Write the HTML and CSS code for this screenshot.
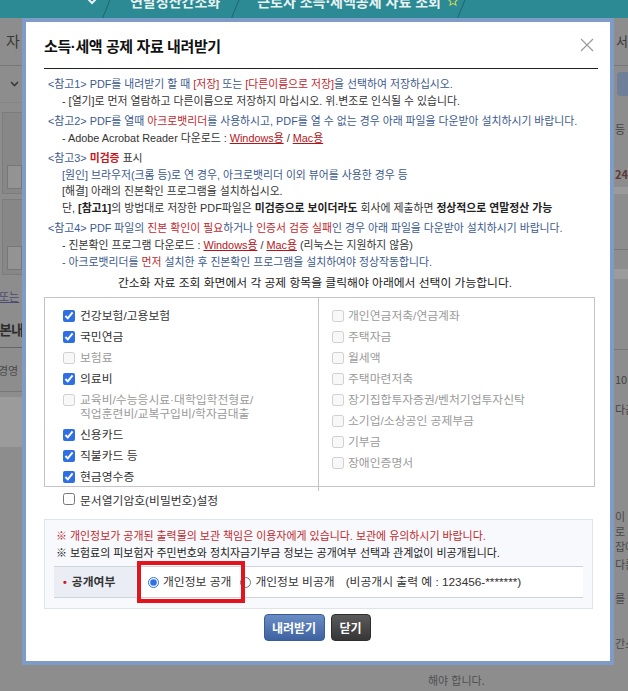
FILE: index.html
```html
<!DOCTYPE html>
<html lang="ko">
<head>
<meta charset="utf-8">
<title>소득·세액 공제 자료 내려받기</title>
<link rel="stylesheet" href="styles.css">
</head>
<body>
<div class="topbar">
  <div class="crumbs">
    <span class="chev"><svg width="14" height="10" viewBox="0 0 14 10"><path d="M2 2l5 5 5-5" fill="none" stroke="#e8f2f2" stroke-width="2"/></svg></span>
    <span class="sep sep1"></span>
    <span class="crumb c1">연말정산간소화</span>
    <span class="sep sep2"></span>
    <span class="crumb c2">근로자 소득·세액공제 자료 조회</span>
    <span class="star"><svg width="12" height="12" viewBox="0 0 12 12"><path d="M6 1l1.4 3.2 3.4.3-2.6 2.3.8 3.4L6 8.4 3 10.2l.8-3.4L1.2 4.5l3.4-.3z" fill="none" stroke="#c9d65a" stroke-width="1.1"/></svg></span>
    <span class="sep sep3"></span>
  </div>
</div>

<div class="page">
  <div class="lstrip">
    <div class="l-row l-r1"><span class="l-big">자</span></div>
    <div class="l-row l-r2"><svg width="9" height="6" viewBox="0 0 9 6"><path d="M1 1l3.5 3.5L8 1" fill="none" stroke="#3a3a3a" stroke-width="1.6"/></svg></div>
    <div class="l-panel l-p1"><div class="l-inner"></div></div>
    <div class="l-panel l-p2"><div class="l-inner"></div></div>
    <div class="l-txt l-link">또는</div>
    <div class="l-row l-r8"><span class="l-bold">본내</span></div>
    <div class="l-row l-r9"><span class="l-small">경영</span></div>
    <div class="l-band"></div>
  </div>
  <div class="mid">
    <p class="midtext">해야 합니다.</p>
  </div>
  <div class="rstrip">
    <div class="r-row r-r1"><span class="r-big">서</span></div>
    <div class="r-btn"></div>
    <div class="r-t r-t1">등</div>
    <div class="r-t r-t2">24</div>
    <div class="r-band r-b1"></div>
    <div class="r-line r-l1"></div>
    <div class="r-band r-b2"></div>
    <div class="r-line r-l2"></div>
    <div class="r-t r-t3">10</div>
    <div class="r-t r-t4">다금</div>
    <div class="r-s r-s1">이</div>
    <div class="r-s">로</div>
    <div class="r-s">잡에</div>
    <div class="r-s r-s4">다른</div>
    <div class="r-s r-s5">를</div>
    <div class="r-s r-s6">간스</div>
  </div>
</div>

<div class="modal">
  <div class="mhead">
    <h1 class="mtitle">소득·세액 공제 자료 내려받기</h1>
    <svg class="close" width="14" height="14" viewBox="0 0 14 14"><path d="M1 1L13 13M13 1L1 13" fill="none" stroke="#9a9a9a" stroke-width="1.2"/></svg>
  </div>

  <div class="notes">
    <div class="nb">
      <p class="blue">&lt;참고1&gt; PDF를 내려받기 할 때 <span class="red">[저장]</span> 또는 <span class="red">[다른이름으로 저장]</span>을 선택하여 저장하십시오.</p>
      <p class="sub dark">- [열기]로 먼저 열람하고 다른이름으로 저장하지 마십시오. 위.변조로 인식될 수 있습니다.</p>
    </div>
    <div class="nb">
      <p class="blue">&lt;참고2&gt; PDF를 열때 <span class="red">아크로뱃리더</span>를 사용하시고, PDF를 열 수 없는 경우 아래 파일을 다운받아 설치하시기 바랍니다.</p>
      <p class="sub dark">- Adobe Acrobat Reader 다운로드 : <a class="lnk">Windows용</a> / <a class="lnk">Mac용</a></p>
    </div>
    <div class="nb">
      <p class="blue">&lt;참고3&gt; <b class="red-b">미검증</b> <span class="dark">표시</span></p>
      <p class="sub blue">[원인] 브라우저(크롬 등)로 연 경우, 아크로뱃리더 이외 뷰어를 사용한 경우 등</p>
      <p class="sub dark">[해결] 아래의 진본확인 프로그램을 설치하십시오.</p>
      <p class="sub dark">단, <b>[참고1]</b>의 방법대로 저장한 PDF파일은 <b>미검증으로 보이더라도</b> 회사에 제출하면 <b>정상적으로 연말정산 가능</b></p>
    </div>
    <div class="nb">
      <p class="blue">&lt;참고4&gt; PDF 파일의 <span class="red">진본 확인이 필요</span>하거나 <span class="red">인증서 검증 실패</span>인 경우 아래 파일을 다운받아 설치하시기 바랍니다.</p>
      <p class="sub dark">- 진본확인 프로그램 다운로드 : <a class="lnk">Windows용</a> / <a class="lnk">Mac용</a> (리눅스는 지원하지 않음)</p>
      <p class="sub blue">- 아크로뱃리더를 <span class="red">먼저</span> 설치한 후 진본확인 프로그램을 설치하여야 정상작동합니다.</p>
    </div>
  </div>

  <p class="guide">간소화 자료 조회 화면에서 각 공제 항목을 클릭해야 아래에서 선택이 가능합니다.</p>

  <div class="items">
    <ul class="col col-l">
      <li><label class="item"><input type="checkbox" checked><span>건강보험/고용보험</span></label></li>
      <li><label class="item"><input type="checkbox" checked><span>국민연금</span></label></li>
      <li><label class="item off"><input type="checkbox" disabled><span>보험료</span></label></li>
      <li><label class="item"><input type="checkbox" checked><span>의료비</span></label></li>
      <li><label class="item off"><input type="checkbox" disabled><span>교육비/수능응시료·대학입학전형료/<br>직업훈련비/교복구입비/학자금대출</span></label></li>
      <li><label class="item"><input type="checkbox" checked><span>신용카드</span></label></li>
      <li><label class="item"><input type="checkbox" checked><span>직불카드 등</span></label></li>
      <li><label class="item"><input type="checkbox" checked><span>현금영수증</span></label></li>
    </ul>
    <ul class="col col-r">
      <li><label class="item off"><input type="checkbox" disabled><span>개인연금저축/연금계좌</span></label></li>
      <li><label class="item off"><input type="checkbox" disabled><span>주택자금</span></label></li>
      <li><label class="item off"><input type="checkbox" disabled><span>월세액</span></label></li>
      <li><label class="item off"><input type="checkbox" disabled><span>주택마련저축</span></label></li>
      <li><label class="item off"><input type="checkbox" disabled><span>장기집합투자증권/벤처기업투자신탁</span></label></li>
      <li><label class="item off"><input type="checkbox" disabled><span>소기업/소상공인 공제부금</span></label></li>
      <li><label class="item off"><input type="checkbox" disabled><span>기부금</span></label></li>
      <li><label class="item off"><input type="checkbox" disabled><span>장애인증명서</span></label></li>
    </ul>
  </div>

  <label class="pw"><input type="checkbox"><span>문서열기암호(비밀번호)설정</span></label>

  <div class="notice">
    <p class="n-red">※ 개인정보가 공개된 출력물의 보관 책임은 이용자에게 있습니다. 보관에 유의하시기 바랍니다.</p>
    <p class="n-dark">※ 보험료의 피보험자 주민번호와 정치자금기부금 정보는 공개여부 선택과 관계없이 비공개됩니다.</p>
    <div class="ptable">
      <div class="pth"><span class="dot">•</span>공개여부</div>
      <div class="ptd">
        <label class="rad rad1"><input type="radio" name="open" checked><span>개인정보 공개</span></label>
        <label class="rad rad2"><input type="radio" name="open"><span>개인정보 비공개</span></label>
        <span class="ex">(비공개시 출력 예 : 123456-*******)</span>
      </div>
      <div class="hl"></div>
    </div>
  </div>

  <div class="btns">
    <button class="btn btn-blue">내려받기</button>
    <button class="btn btn-dark">닫기</button>
  </div>
</div>
</body>
</html>
```

FILE: styles.css
```css
html, body {
  margin: 0;
  padding: 0;
  width: 628px;
  height: 691px;
  overflow: hidden;
}
body {
  position: relative;
  background: #8d8d8d;
  font-family: "Noto Sans CJK KR", "Noto Sans", sans-serif;
}
p { margin: 0; }

/* top bar */
.topbar {
  height: 18px;
  background: #2b8a94;
  overflow: hidden;
}
.crumbs {
  display: flex;
  align-items: center;
  height: 22px;
  margin-top: -10px;
  color: #e8f2f2;
  font-weight: bold;
  font-size: 14px;
  white-space: nowrap;
}
.chev { margin-left: 85px; display: flex; }
.sep {
  width: 0;
  height: 40px;
  border-left: 1px solid rgba(0,0,0,0.28);
  transform: skewX(-22deg);
}
.sep1 { margin-left: 10px; }
.c1 { margin-left: 20px; }
.sep2 { margin-left: 18px; }
.c2 { margin-left: 18px; }
.star { margin-left: 6px; display: flex; }
.sep3 { margin-left: 5px; }

/* background page */
.page {
  display: flex;
  height: 673px;
}
.lstrip {
  width: 22px;
  overflow: hidden;
  display: flex;
  flex-direction: column;
  color: #3a3a3a;
  white-space: nowrap;
}
.l-row { border-bottom: 1px solid #777; display: flex; align-items: center; }
.l-r1 { height: 47px; padding-left: 6px; align-items: flex-start; }
.l-big { font-size: 15px; line-height: 20px; margin-top: 13px; color: #383838; }
.l-r2 { height: 36px; justify-content: flex-end; padding-right: 3px; border-bottom-color: #858585; }
.l-panel {
  margin-top: 9px;
  margin-left: 2px;
  height: 80px;
  background: #878787;
  border: 1px solid #7c7c7c;
  border-right: 0;
  display: flex;
  align-items: flex-end;
}
.l-p2 { margin-top: 5px; height: 74px; }
.l-inner {
  width: 14px;
  height: 22px;
  margin: 0 0 4px 4px;
  background: #939393;
  border: 1px solid #777;
}
.l-txt { font-size: 11px; line-height: 14px; margin-top: 14px; color: #4a4a70; text-decoration: underline; margin-left: -1px; }
.l-r8 { height: 44px; border-bottom-color: #666; }
.l-bold { font-size: 14px; font-weight: bold; color: #2e2e2e; margin-left: -1px; margin-top: 8px; letter-spacing: -1px; }
.l-r9 { height: 43px; }
.l-small { font-size: 11px; color: #4a4a4a; margin-left: -2px; }
.l-band { margin-top: 5px; height: 50px; background: #9b9b9b; }

.mid { flex: 1; position: relative; }
.midtext {
  margin-top: 654px;
  padding-left: 406px;
  font-size: 11px;
  line-height: 16px;
  color: #505050;
}
.rstrip {
  width: 14px;
  overflow: hidden;
  display: flex;
  flex-direction: column;
  color: #444;
  font-size: 11px;
  white-space: nowrap;
}
.r-row { border-bottom: 1px solid #777; }
.r-r1 { height: 47px; padding-left: 2px; }
.r-big { display: block; font-size: 13px; line-height: 20px; margin-top: 13px; color: #3a3a3a; }
.r-btn { margin: 6px 0 0 3px; height: 24px; background: #6f7f99; border-radius: 4px 0 0 4px; }
.r-t { height: 16px; line-height: 16px; padding-left: 1px; }
.r-t1 { margin-top: 25px; }
.r-t2 { margin-top: 29px; color: #5a3a3a; font-weight: bold; }
.r-band { background: #9b9b9b; }
.r-b1 { margin-top: 5px; height: 7px; }
.r-line { height: 1px; background: #777; }
.r-l1 { margin-top: 55px; }
.r-b2 { margin-top: 19px; height: 10px; }
.r-l2 { margin-top: 70px; }
.r-t3 { margin-top: 21px; }
.r-t4 { margin-top: 14px; }
.r-s { height: 15px; line-height: 15px; padding-left: 1px; color: #4a4a4a; }
.r-s1 { margin-top: 92px; }
.r-s4 { margin-top: 3px; }
.r-s5 { margin-top: 19px; }
.r-s6 { margin-top: 30px; }

/* modal */
.modal {
  position: absolute;
  left: 22px;
  top: 18px;
  width: 592px;
  height: 647px;
  box-sizing: border-box;
  border: 4px solid #7f9cc8;
  background: #fff;
  color: #333;
  font-family: "Liberation Sans", "Noto Sans CJK KR", sans-serif;
}
.mhead {
  margin: 0 12px 0 18px;
  height: 46px;
  border-bottom: 1px solid #222;
  display: flex;
  align-items: center;
  justify-content: space-between;
}
.mtitle {
  margin: 0;
  font-size: 15px;
  font-weight: bold;
  color: #111;
  letter-spacing: -0.4px;
}
.close { margin-right: 4px; }

.notes {
  padding: 7px 0 0 22px;
  font-size: 10.85px;
  line-height: 16.7px;
  white-space: nowrap;
}
.nb { margin-bottom: 3.5px; }
.nb:last-child { margin-bottom: 0; }
.sub { padding-left: 14px; }
.blue { color: #3b5a8e; }
.dark { color: #333; }
.red { color: #c0282d; }
.red-b { color: #c4161c; font-weight: bold; }
.notes b { font-weight: bold; color: #222; }
.notes .red-b { color: #c4161c; }
.lnk { color: #b3141a; text-decoration: underline; }

.guide {
  margin: 5px 0 0 0;
  padding-right: 6px;
  text-align: center;
  font-size: 11.8px;
  line-height: 16px;
  color: #222;
}

.items {
  margin: 6px 0 0 18px;
  width: 551px;
  height: 190px;
  box-sizing: border-box;
  border: 1px solid #c4c4c4;
  display: grid;
  grid-template-columns: 274px 1fr;
}
.col {
  list-style: none;
  margin: 0;
  padding: 11px 0 0 0;
}
.col-l { padding-left: 18px; border-right: 1px solid #c4c4c4; }
.col-r { padding-left: 13px; }
.col li { margin-bottom: 7px; }
.item {
  display: flex;
  align-items: flex-start;
  font-size: 11.8px;
  line-height: 14px;
  color: #333;
  white-space: nowrap;
}
.item input {
  width: 12px;
  height: 12px;
  margin: 1px 5px 0 0;
  accent-color: #2f6fe4;
  flex: none;
}
.col-r .item input { margin-right: 4px; }
.item.off { color: #9a9a9a; }

.pw {
  display: flex;
  align-items: center;
  margin: 4px 0 0 37px;
  height: 16px;
  font-size: 11.8px;
  color: #333;
}
.pw input {
  width: 12px;
  height: 12px;
  margin: 0 5px 0 0;
}

.notice {
  margin: 12px 0 0 18px;
  width: 549px;
  box-sizing: border-box;
  border: 1px solid #dfe4ec;
  background: #f7f9fc;
  padding: 8px 9px 10px 9px;
  font-size: 10.95px;
  line-height: 16.5px;
  white-space: nowrap;
}
.n-red { padding-left: 2px; color: #c0282d; }
.n-dark { padding-left: 2px; color: #222; }
.ptable {
  position: relative;
  margin-top: 5px;
  height: 32px;
  box-sizing: border-box;
  border-top: 1px solid #cfd4dc;
  border-bottom: 1px solid #cfd4dc;
  display: flex;
}
.pth {
  width: 82px;
  background: #eaedf3;
  display: flex;
  align-items: center;
  padding-left: 9px;
  box-sizing: border-box;
  font-weight: bold;
  font-size: 11.8px;
  color: #333;
}
.dot { color: #d0181e; margin-right: 5px; font-size: 11px; }
.ptd {
  flex: 1;
  background: #fff;
  display: flex;
  align-items: center;
  padding-left: 12px;
  font-size: 11.8px;
  color: #333;
}
.rad { display: flex; align-items: center; }
.rad input {
  width: 11px;
  height: 11px;
  margin: 0 4px 0 0;
  accent-color: #2f6fe4;
}
.rad2 { margin-left: 9px; }
.ex { margin-left: 11px; }
.hl {
  position: absolute;
  left: 83px;
  top: -6px;
  width: 108px;
  height: 42px;
  box-sizing: border-box;
  border: 4.5px solid #e3141d;
}

.btns {
  margin-top: 5px;
  display: flex;
  justify-content: center;
  gap: 6px;
  padding-right: 2px;
}
.btn {
  height: 27px;
  border-radius: 4px;
  color: #fff;
  font-family: "Noto Sans CJK KR", "Noto Sans", sans-serif;
  font-weight: bold;
  font-size: 12px;
  padding: 0;
  white-space: nowrap;
  cursor: pointer;
}
.btn-blue {
  width: 61px;
  border: 1px solid #3b5c95;
  background: linear-gradient(#6a8cc4, #3e62a1);
}
.btn-dark {
  width: 40px;
  border: 1px solid #2e2e2e;
  background: linear-gradient(#5b5b5b, #363636);
}
```
